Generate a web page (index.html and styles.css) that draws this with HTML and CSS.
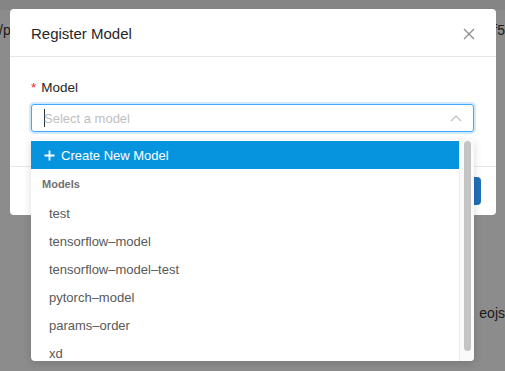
FILE: index.html
```html
<!DOCTYPE html>
<html lang="en">
<head>
    <meta charset="UTF-8">
    <meta name="viewport" content="width=device-width, initial-scale=1.0">
    <title>Register Model</title>
    <link rel="stylesheet" href="styles.css">
</head>
<body>

    <!-- Page behind the modal -->
    <div class="page">
        <div class="page-top"></div>
        <div class="page-row">
            <span class="page-left">/p</span>
            <span class="page-right">f5</span>
        </div>
        <div class="page-row page-row-low">
            <span></span>
            <span class="page-right">eojs</span>
        </div>
    </div>

    <div class="mask"></div>

    <!-- Modal -->
    <div class="modal">
        <div class="modal-header">
            <span class="modal-title">Register Model</span>
            <svg class="modal-close" width="12" height="12" viewBox="0 0 12 12">
                <path d="M1 1 L11 11 M11 1 L1 11" stroke="#8c8c8c" stroke-width="1.3" fill="none"/>
            </svg>
        </div>
        <div class="modal-body">
            <label class="form-label"><span class="required">*</span>Model</label>
            <div class="select">
                <span class="caret"></span>
                <span class="placeholder">Select a model</span>
                <svg class="select-arrow" width="12" height="8" viewBox="0 0 12 8">
                    <path d="M1 7 L6 2 L11 7" stroke="#bfbfbf" stroke-width="1.2" fill="none"/>
                </svg>
            </div>
        </div>
        <div class="modal-footer">
            <button class="btn">Register</button>
        </div>
    </div>

    <!-- Dropdown -->
    <div class="dropdown">
        <div class="dropdown-list">
            <div class="option option-create">
                <svg width="11" height="11" viewBox="0 0 11 11">
                    <path d="M5.5 0.5 V10.5 M0.5 5.5 H10.5" stroke="#fff" stroke-width="1.8" fill="none"/>
                </svg>
                Create New Model
            </div>
            <div class="option-group">Models</div>
            <div class="option">test</div>
            <div class="option">tensorflow&#8211;model</div>
            <div class="option">tensorflow&#8211;model&#8211;test</div>
            <div class="option">pytorch&#8211;model</div>
            <div class="option">params&#8211;order</div>
            <div class="option">xd</div>
        </div>
        <div class="scrollbar">
            <div class="scrollbar-thumb"></div>
        </div>
    </div>

</body>
</html>
```

FILE: styles.css
```css
body {
    font-family: 'Liberation Sans', Arial, sans-serif;
    margin: 0;
    width: 505px;
    height: 371px;
    overflow: hidden;
    position: relative;
    background: #fff;
    color: #333;
}

/* Page behind */
.page {
    height: 100%;
}

.page-top {
    height: 10px;
    background: #f3f3f3;
    border-bottom: 1px solid #fff;
}

.page-row {
    display: flex;
    justify-content: space-between;
    font-size: 14px;
    margin-top: 11px;
}

.page-row-low {
    margin-top: 267px;
}

.page-left {
    margin-left: -1px;
}

.page-right {
    margin-right: 0;
}

.mask {
    position: absolute;
    top: 0;
    left: 0;
    right: 0;
    bottom: 0;
    background: rgba(0, 0, 0, 0.45);
}

/* Modal */
.modal {
    position: absolute;
    top: 9px;
    left: 10px;
    width: 486px;
    background: #fff;
    border-radius: 4px;
}

.modal-header {
    height: 47px;
    display: flex;
    align-items: center;
    justify-content: space-between;
    padding: 0 21px 0 21px;
    border-bottom: 1px solid #e8e8e8;
}

.modal-title {
    font-size: 15px;
    color: #262626;
    padding-top: 1px;
}

.modal-close {
    margin-top: 2px;
}

.modal-body {
    padding: 23px 22px 34px 21px;
}

.form-label {
    display: block;
    font-size: 13.5px;
    color: #262626;
    margin-bottom: 9px;
}

.required {
    color: #f5222d;
    margin-right: 5px;
}

.select {
    height: 26px;
    border: 1px solid #40a9ff;
    border-radius: 3px;
    box-shadow: 0 0 0 2px rgba(24, 144, 255, 0.2);
    display: flex;
    align-items: center;
    padding: 0 11px 0 12px;
}

.caret {
    width: 1px;
    height: 18px;
    background: #333;
    margin-right: -1px;
}

.placeholder {
    flex: 1;
    font-size: 13px;
    color: #bfbfbf;
}

.select-arrow {
    margin-top: -1px;
}

.modal-footer {
    border-top: 1px solid #e8e8e8;
    padding: 10px 15px 10px 15px;
    display: flex;
    justify-content: flex-end;
}

.btn {
    height: 28px;
    padding: 0 15px;
    border: none;
    border-radius: 4px;
    background: #2170b8;
    color: #fff;
    font-family: inherit;
    font-size: 13px;
}

/* Dropdown */
.dropdown {
    position: absolute;
    top: 140px;
    left: 31px;
    width: 443px;
    height: 221px;
    background: #fff;
    border-radius: 0 0 4px 4px;
    box-shadow: 0 2px 8px rgba(0, 0, 0, 0.15);
    display: flex;
    overflow: hidden;
}

.dropdown-list {
    flex: 1;
    padding-top: 1px;
}

.option {
    height: 28px;
    display: flex;
    align-items: center;
    padding-left: 18px;
    font-size: 13px;
    color: #595959;
}

.option-create {
    background: #0794df;
    color: #fff;
    padding-left: 13px;
    gap: 6px;
}

.option-group {
    height: 30px;
    display: flex;
    align-items: center;
    padding-left: 11px;
    font-size: 11px;
    font-weight: bold;
    color: #707070;
}

.scrollbar {
    width: 15px;
    border-left: 1px solid #ececec;
    background: #fafafa;
    padding: 1px 3px 0 3px;
    box-sizing: border-box;
}

.scrollbar-thumb {
    width: 7px;
    margin-left: 1px;
    height: 210px;
    border-radius: 4px;
    background: #c4c4c4;
}
```
